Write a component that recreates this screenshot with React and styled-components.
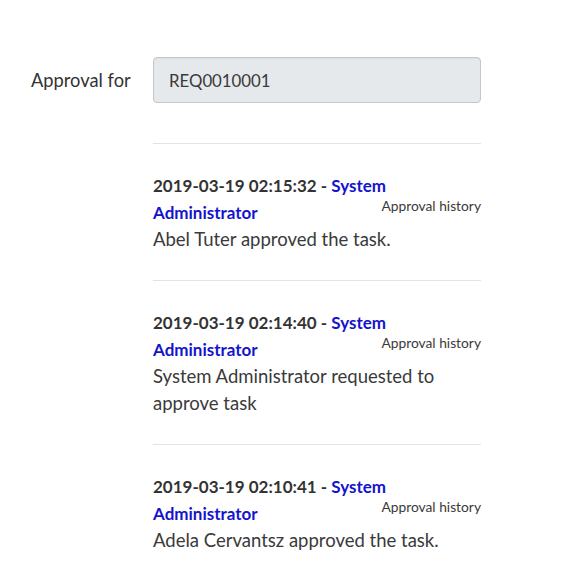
import React from 'react'
import styled, { createGlobalStyle } from 'styled-components'

const GlobalStyle = createGlobalStyle`
  body {
    margin: 0;
    background: #fff;
    font-family: "Lato", "Noto Sans", sans-serif;
    color: #2e2e2e;
  }
`

const Page = styled.div`
  padding: 57px 0 0 0;
  width: 581px;
`

const FieldRow = styled.div`
  display: flex;
  align-items: center;
`

const Label = styled.label`
  width: 131px;
  padding-left: 31px;
  box-sizing: border-box;
  font-size: 18.3px;
  color: #333;
  margin-right: 22px;
  white-space: nowrap;
`

const ReadonlyInput = styled.div`
  width: 328px;
  height: 46px;
  box-sizing: border-box;
  background: #e6e9ec;
  border: 1px solid #c3c6ca;
  border-radius: 4px;
  box-shadow: inset 0 1px 1px rgba(0, 0, 0, 0.05);
  padding: 0 15px;
  display: flex;
  align-items: center;
  font-size: 16.8px;
  color: #3a3a3a;
`

const History = styled.div`
  margin: 40px 0 0 153px;
  width: 328px;
`

const Entry = styled.div`
  border-top: 1px solid #e3e3e3;
  padding: 28px 0 27px;
  line-height: 27px;
  &:last-child {
    padding-bottom: 10px;
  }
`

const Header = styled.div`
  color: #333;
  font-size: 17px;
  font-weight: 700;
`

const UserLink = styled.a`
  color: #1414cc;
  text-decoration: none;
`

const Source = styled.span`
  float: right;
  font-size: 13.8px;
  line-height: 14px;
  font-weight: 400;
  color: #3a3a3a;
`

const Body = styled.div`
  font-size: 18.5px;
  color: #3a3a3a;
`

const entries = [
  { time: '2019-03-19 02:15:32', text: 'Abel Tuter approved the task.' },
  { time: '2019-03-19 02:14:40', text: 'System Administrator requested to approve task' },
  { time: '2019-03-19 02:10:41', text: 'Adela Cervantsz approved the task.' },
]

export default function App() {
  return (
    <Page>
      <GlobalStyle />
      <FieldRow>
        <Label>Approval for</Label>
        <ReadonlyInput>REQ0010001</ReadonlyInput>
      </FieldRow>
      <History>
        {entries.map((e) => (
          <Entry key={e.time}>
            <Header>
              {e.time} - <UserLink href="#">System Administrator</UserLink>
              <Source>Approval history</Source>
            </Header>
            <Body>{e.text}</Body>
          </Entry>
        ))}
      </History>
    </Page>
  )
}
